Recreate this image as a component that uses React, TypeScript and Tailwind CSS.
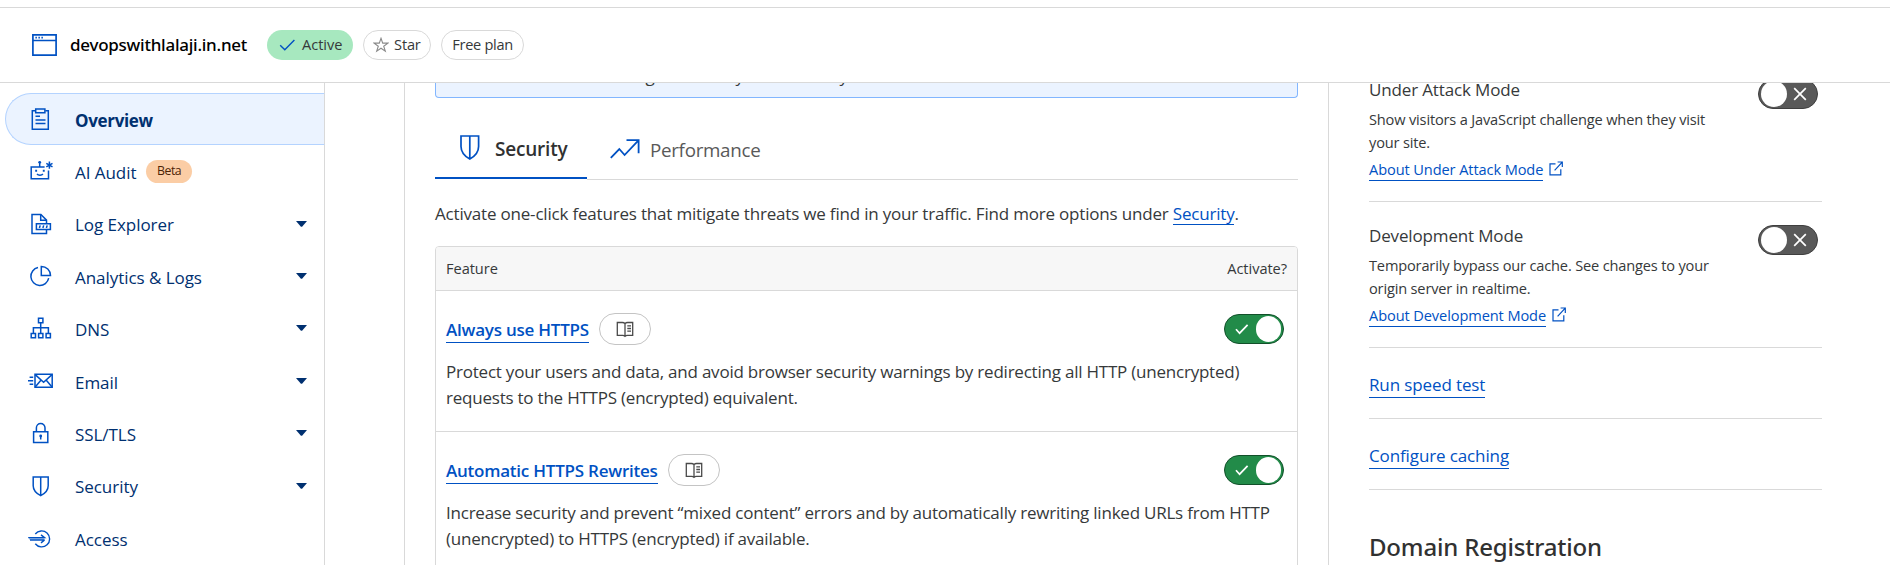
import type { ReactNode } from "react";

const Svg = ({ w, h, children, sw = 1.5, className = "" }: { w: number; h: number; children: ReactNode; sw?: number; className?: string }) => (
  <svg width={w} height={h} viewBox={`0 0 ${w} ${h}`} fill="none" stroke="currentColor" strokeWidth={sw} className={`shrink-0 ${className}`}>
    {children}
  </svg>
);

const WindowIcon = () => (
  <Svg w={25} h={22} sw={1.7} className="text-[#0051c3]">
    <path d="M.9.9h23.2v20.2H.9zM.9 6.5h23.2" />
    <path d="M3.4 3.7h1.5M6.4 3.7h1.5M9.4 3.7h1.5" />
  </Svg>
);

const ClipboardIcon = () => (
  <Svg w={26} h={24}>
    <path d="M8 3.8H5.300v18.500h16V3.8h-3" />
    <path d="M8.700 2.1h9.200v3.600H8.700z" />
    <path d="M8.500 9.200h4.500M8.500 12.900h10M8.500 16.500h10" />
  </Svg>
);

const RobotIcon = () => (
  <Svg w={26} h={24}>
    <path d="M17.600 8H4.200v11.800h17.300v-8.300" />
    <path d="M12.700 8V3.500" />
    <circle cx="12.700" cy="3.300" r="1.400" fill="currentColor" stroke="none" />
    <path d="M8.200 11.800h1.900M15.800 11.800h1.900" strokeWidth="1.900" />
    <path d="M10 15c1.200 1.500 4.700 1.500 5.900 0" />
    <path d="M22.400 2.500v7.200M19.300 4.300l6.200 3.600M25.500 4.300l-6.200 3.600" />
  </Svg>
);

const LogIcon = () => (
  <Svg w={26} h={24}>
    <path d="M9.400 17.500V11.800h14v5.800h-14z" />
    <path d="M19.500 18v3.400H5V2.500h8.900l5.600 5.600v3.600" />
    <path d="M13.700 2.700v5.600h5.600" />
    <path d="M12.400 16l.8-2.600M15.900 16l.8-2.600M19.400 16l.8-2.600" />
  </Svg>
);

const PieIcon = () => (
  <Svg w={26} h={24}>
    <path d="M11 3.600a9 9 0 1 0 10.700 10.600" />
    <path d="M14.300 2.400v9.200h9.200a9.200 9.200 0 0 0-9.200-9.200z" />
  </Svg>
);

const DnsIcon = () => (
  <Svg w={26} h={24}>
    <path d="M11.500 2.300h4.400v4.400h-4.400zM4.200 17.400h4.300v4.300H4.200zM11.600 17.400h4.300v4.300h-4.300zM19.100 17.400h4.300v4.300h-4.300z" />
    <path d="M13.700 6.700v10.700M6.400 17.400v-5.600h15v5.600" />
  </Svg>
);

const MailIcon = () => (
  <Svg w={26} h={24}>
    <path d="M8 5.300h17.200v13H8z" />
    <path d="M8.200 5.600l8.400 7.600 8.400-7.600M8.200 18l5.900-7M25 18l-5.900-7" />
    <path d="M2.600 8.200h3.600M1 11.700h5.200M2.600 15.200h3.600" />
  </Svg>
);

const LockIcon = () => (
  <Svg w={26} h={24}>
    <path d="M6.600 10.800h14.200V21.500H6.600z" />
    <path d="M9.400 10.600V6.700a4.300 4.300 0 0 1 8.600 0v3.900" />
    <path d="M13.700 15V18.500" />
    <circle cx="13.700" cy="15" r="1.400" fill="currentColor" stroke="none" />
  </Svg>
);

const SideShield = () => (
  <Svg w={26} h={24}>
    <path d="M6.200 3h15v8.700c0 4.400-3.200 7.700-7.500 10-4.300-2.300-7.500-5.600-7.500-10zM13.700 3v18.700" />
  </Svg>
);

const AccessIcon = () => (
  <Svg w={26} h={24} sw={1.400}>
    <path d="M8.300 8a8 8 0 1 1 0 9.800" />
    <path d="M1.200 11.600h16.300L14 8.900M17.600 14H3M17.600 14L14 16.900" />
    <path d="M2 12.800h15.500" strokeOpacity=".45" />
  </Svg>
);

const TabShield = () => (
  <Svg w={20} h={26} sw={1.700} className="mt-[20px] text-[#0051c3]">
    <path d="M1 1h17.600v10.400c0 5.600-3.800 9.800-8.800 12.600C4.800 21.200 1 17 1 11.400zM9.800 1v23" />
  </Svg>
);

const Toggle = ({ on }: { on: boolean }) =>
  on ? (
    <span className="flex h-[30px] w-[60px] shrink-0 items-center justify-between rounded-full border border-[#12502a] bg-[#228b49] pl-[10px] pr-[2px]">
      <Svg w={14} h={12} sw={1.700} className="text-white">
        <path d="M1 6.200l3.600 4L12.600 1.800" />
      </Svg>
      <span className="size-[25.500px] rounded-full bg-white" />
    </span>
  ) : (
    <span className="flex h-[30px] w-[60px] shrink-0 items-center justify-between rounded-full border border-[#3f3f3f] bg-[#595959] pl-[2px] pr-[10px]">
      <span className="size-[25.500px] rounded-full bg-white" />
      <Svg w={14} h={14} sw={1.700} className="text-white">
        <path d="M1.200 1.200l11.600 11.600M12.800 1.200L1.200 12.800" />
      </Svg>
    </span>
  );

const ExternalIcon = () => (
  <Svg w={14} h={15} sw={1.200} className="text-[#0051c3]">
    <path d="M6.500 2.900H1v11h10.800V8.200" />
    <path d="M5.600 9.400L13 1.400M8.600 1h4.700v4.900" />
  </Svg>
);

const BookIcon = () => (
  <Svg w={18} h={17} sw={1.300} className="text-[#4a4a4a]">
    <path d="M9 2.600C8.200 1.700 7.400 1.500 6.400 1.500H1.300v12.800h5.400c1 0 1.700.3 2.300 1 .6-.7 1.300-1 2.300-1h5.400V1.500h-5.100c-1 0-1.800.2-2.600 1.100zM9 2.600v12.600" />
    <path d="M11.300 4.900h3.700M11.300 7.500h3.700M11.300 10.100h3.700" />
  </Svg>
);

const nav = [
  { label: "AI Audit", icon: <RobotIcon />, beta: true, caret: false },
  { label: "Log Explorer", icon: <LogIcon />, beta: false, caret: true },
  { label: "Analytics & Logs", icon: <PieIcon />, beta: false, caret: true },
  { label: "DNS", icon: <DnsIcon />, beta: false, caret: true },
  { label: "Email", icon: <MailIcon />, beta: false, caret: true },
  { label: "SSL/TLS", icon: <LockIcon />, beta: false, caret: true },
  { label: "Security", icon: <SideShield />, beta: false, caret: true },
  { label: "Access", icon: <AccessIcon />, beta: false, caret: false },
];

const features = [
  {
    name: "Always use HTTPS",
    lines: [
      "Protect your users and data, and avoid browser security warnings by redirecting all HTTP (unencrypted)",
      "requests to the HTTPS (encrypted) equivalent.",
    ],
  },
  {
    name: "Automatic HTTPS Rewrites",
    lines: [
      "Increase security and prevent “mixed content” errors and by automatically rewriting linked URLs from HTTP",
      "(unencrypted) to HTTPS (encrypted) if available.",
    ],
  },
];

const modes = [
  { title: "Under Attack Mode", lines: ["Show visitors a JavaScript challenge when they visit", "your site."], link: "About Under Attack Mode" },
  { title: "Development Mode", lines: ["Temporarily bypass our cache. See changes to your", "origin server in realtime."], link: "About Development Mode" },
];

function Sidebar() {
  return (
    <aside className="w-[325px] shrink-0 border-r border-[#d9d9d9] pt-[10px] text-[#003070]">
      <div className="-mr-px ml-[5px] flex h-[52px] items-center rounded-l-full border border-[#b4d3ff] border-r-[#d9d9d9] bg-[#ebf3ff] pl-[21px]">
        <span className="text-[#0051c3]"><ClipboardIcon /></span>
        <span className="ml-[22px] pt-[3px] font-bold tracking-[-0.330px]">Overview</span>
      </div>
      {nav.map((n) => (
        <div key={n.label} className="flex h-[52.400px] items-center pl-[27px] pr-[17px]">
          <span className="text-[#0051c3]">{n.icon}</span>
          <span className="ml-[22px] pt-[3px] tracking-[-0.050px]">{n.label}</span>
          {n.beta && <span className="ml-[10px] flex h-[23px] items-center rounded-full bg-[#fbcda5] px-[10.500px] text-[12.300px] tracking-[-0.450px] text-[#4d2306]">Beta</span>}
          {n.caret && (
            <svg width="11" height="6" viewBox="0 0 11 6" className="ml-auto"><path d="M0 0h11L6.300 5.400q-.8.800-1.600 0z" fill="#003070" /></svg>
          )}
        </div>
      ))}
    </aside>
  );
}

function MainPanel() {
  return (
    <main className="ml-[79px] w-[925px] shrink-0 border-x border-[#d9d9d9] px-[30px]">
      <div className="h-[15px] overflow-hidden rounded-b-[4px] border border-t-0 border-[#82b6ff] bg-[#ebf3ff]">
        <div className="-mt-[19px] flex pl-[209.500px] leading-6">
          <span className="w-[90px]">g</span>
          <span className="w-[104px]">y</span>
          <span>y</span>
        </div>
      </div>
      <div className="flex h-[82px] items-stretch">
        <div className="mb-px flex w-[152px] items-center border-b-2 border-[#0051c3] pl-[25px]">
          <TabShield />
          <span className="ml-[15px] mt-[24px] text-[19px] font-semibold tracking-[-0.200px] text-[#313131]">Security</span>
        </div>
        <div className="flex flex-1 items-center border-b border-[#d9d9d9] pl-[23px]">
          <Svg w={30} h={20} sw={1.800} className="mt-[20px] text-[#0051c3]">
            <path d="M.8 18.800L9.300 10l5.300 6L28.200 1.600M16.500 1.200h12.100v13" />
          </Svg>
          <span className="ml-[10px] mt-[24px] text-[18.800px] tracking-[-0.300px] text-[#595959]">Performance</span>
        </div>
      </div>
      <p className="mt-[21.200px] h-[45px] leading-[26.400px]">
        Activate one-click features that mitigate threats we find in your traffic. Find more options under{" "}
        <a className="inline-block border-b border-[#0051c3] leading-[21px] text-[#0051c3]">Security</a>.
      </p>
      <section className="-mt-[0.200px] rounded-t-[4px] border border-[#d9d9d9]">
        <div className="flex h-[44px] items-center justify-between rounded-t-[3px] border-b border-[#d9d9d9] bg-[#f7f7f7] px-[10px] text-[14.600px] tracking-[-0.050px]">
          <span>Feature</span>
          <span>Activate?</span>
        </div>
        {features.map((f) => (
          <div key={f.name} className="h-[141px] border-b border-[#d9d9d9] pl-[10px] pr-[13px] pt-[22px]">
            <div className="flex h-[32px] items-center">
              <a className="mt-[2px] border-b border-[#0051c3] font-semibold leading-6 tracking-[-0.230px] text-[#0051c3]">{f.name}</a>
              <span className="ml-[10px] flex h-[32px] w-[52px] items-center justify-center rounded-full border border-[#c4c4c4]"><BookIcon /></span>
              <span className="ml-auto"><Toggle on /></span>
            </div>
            <p className="mt-[13.500px] whitespace-nowrap leading-[26.400px] tracking-[-0.223px]">
              {f.lines[0]}
              <br />
              {f.lines[1]}
            </p>
          </div>
        ))}
      </section>
    </main>
  );
}

function RightPanel() {
  return (
    <div className="-mt-[27px] ml-[40px] w-[453px] shrink-0">
      {modes.map((m) => (
        <div key={m.title} className="flex h-[146px] justify-between border-b border-[#d9d9d9] pr-[4px]">
          <div className="pt-[20.600px]">
            <h3 className="leading-[26.400px] tracking-[-0.150px]">{m.title}</h3>
            <p className="mt-[5px] whitespace-nowrap text-[14.600px] leading-[23.100px] tracking-[-0.170px]">
              {m.lines[0]}
              <br />
              {m.lines[1]}
            </p>
            <div className="mt-[4.500px] flex items-start text-[14.600px] tracking-[-0.100px]">
              <a className="border-b border-[#0051c3] leading-[21.500px] text-[#0051c3]">{m.link}</a>
              <span className="ml-[6px] mt-[2px]"><ExternalIcon /></span>
            </div>
          </div>
          <div className="pt-[23px]"><Toggle on={false} /></div>
        </div>
      ))}
      {["Run speed test", "Configure caching"].map((l) => (
        <div key={l} className="h-[71px] border-b border-[#d9d9d9] pt-[24px]">
          <a className="inline-block border-b border-[#0051c3] leading-6 tracking-[-0.120px] text-[#0051c3]">{l}</a>
        </div>
      ))}
      <h2 className="mt-[39px] font-['Noto_Sans',sans-serif] text-[24px] font-medium leading-[36px] tracking-[-0.180px] text-[#313131]">Domain Registration</h2>
    </div>
  );
}

export default function App() {
  return (
    <div className="flex h-[565px] w-[1890px] flex-col overflow-hidden bg-white pt-[7px] font-['Open_Sans',sans-serif] text-[17px] tracking-[-0.190px] text-[#36393a]">
      <header className="flex h-[76px] shrink-0 items-center border-y border-[#d9d9d9] pl-[32px] text-[14.600px]">
        <WindowIcon />
        <span className="ml-[13px] font-['Noto_Sans',sans-serif] text-[17px] font-medium tracking-[-0.250px] text-black">devopswithlalaji.in.net</span>
        <span className="ml-[20px] flex h-[30px] w-[86px] items-center rounded-full bg-[#a7e8bf] pl-[12px]">
          <Svg w={17} h={12} sw={1.400} className="text-[#0051c3]"><path d="M1.200 6.200l4.600 4.600L15.400 1" /></Svg>
          <span className="ml-[6px] tracking-[-0.050px]">Active</span>
        </span>
        <span className="ml-[10px] flex h-[30px] w-[68px] items-center rounded-full border border-[#d9d9d9] pl-[9px]">
          <Svg w={16} h={16} sw={1.100} className="text-[#8a8a8a]"><path d="M8 1.300l1.700 4.800h5.200l-4.200 3.100 1.600 5L8 11.200l-4.300 3 1.600-5L1.100 6.100h5.200z" /></Svg>
          <span className="ml-[5px]">Star</span>
        </span>
        <span className="ml-[10px] flex h-[30px] w-[83px] items-center justify-center rounded-full border border-[#d9d9d9] tracking-[-0.300px]">Free plan</span>
      </header>
      <div className="flex min-h-0 flex-1 overflow-hidden">
        <Sidebar />
        <MainPanel />
        <RightPanel />
      </div>
    </div>
  );
}
